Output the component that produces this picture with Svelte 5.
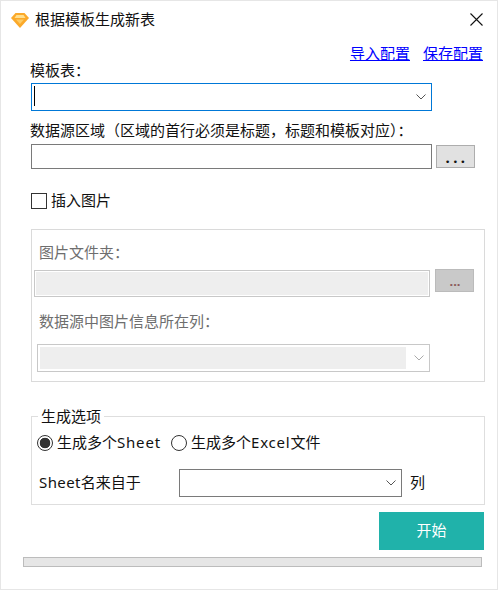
<script>
  const chevron = 'M0.5 0.5 L5 5 L9.5 0.5';
</script>

<div class="window">
  <header class="titlebar">
    <svg class="logo" width="18" height="15" viewBox="0 0 18 15">
      <path d="M4.5 0 H13.5 L18 5 L9 15 L0 5 Z" fill="#fba92a" />
      <path d="M5.5 2 H12.5 L14.5 5 H3.5 Z" fill="#ffdf8e" />
      <path d="M5 6.5 H13 L9 11 Z" fill="#fdcb63" />
    </svg>
    <span class="title">根据模板生成新表</span>
    <svg class="close" width="13" height="13" viewBox="0 0 13 13">
      <path d="M0.5 0.5 L12.5 12.5 M12.5 0.5 L0.5 12.5" stroke="#111" stroke-width="1.1" fill="none" />
    </svg>
  </header>

  <div class="links">
    <a href="#import">导入配置</a>
    <a href="#save">保存配置</a>
  </div>

  <main class="form">
    <div class="label first">模板表：</div>
    <div class="combo focused">
      <span class="caret"></span>
      <svg class="chev" width="10" height="6" viewBox="0 0 10 6"><path d={chevron} stroke="#555" fill="none" /></svg>
    </div>

    <div class="label second">数据源区域（区域的首行必须是标题，标题和模板对应）：</div>
    <div class="source-row">
      <div class="input"></div>
      <button class="browse">...</button>
    </div>

    <label class="check-row">
      <span class="checkbox"></span>
      <span class="lifted">插入图片</span>
    </label>

    <section class="panel">
      <div class="dim-label one">图片文件夹：</div>
      <div class="folder-row">
        <div class="dim-input"></div>
        <button class="dim-browse">...</button>
      </div>
      <div class="dim-label two">数据源中图片信息所在列：</div>
      <div class="dim-combo">
        <div class="dim-fill"></div>
        <svg class="chev" width="10" height="6" viewBox="0 0 10 6"><path d={chevron} stroke="#aaa" fill="none" /></svg>
      </div>
    </section>

    <fieldset class="options">
      <legend>生成选项</legend>
      <div class="radio-row">
        <span class="radio on"></span><span class="r1 lifted">生成多个<span class="latin">Sheet</span></span>
        <span class="radio"></span><span class="lifted">生成多个<span class="latin">Excel</span>文件</span>
      </div>
      <div class="sheet-row">
        <span class="sheet-label lifted"><span class="latin tight">Sheet</span>名来自于</span>
        <div class="combo plain">
          <svg class="chev" width="10" height="6" viewBox="0 0 10 6"><path d={chevron} stroke="#555" fill="none" /></svg>
        </div>
        <span class="col lifted">列</span>
      </div>
    </fieldset>

    <button class="start">开始</button>
  </main>

  <div class="progress"></div>
</div>

<style>
  :global(body) {
    margin: 0;
  }
  .window {
    width: 498px;
    height: 590px;
    box-sizing: border-box;
    border: 1px solid #e6e6e6;
    background: #fff;
    font: 15px/16px "Noto Sans", "Noto Sans CJK SC", sans-serif;
    color: #111;
    overflow: hidden;
  }
  .titlebar {
    box-sizing: border-box;
    height: 39px;
    display: flex;
    align-items: center;
    padding: 0 14px 4px 10px;
  }
  .logo {
    flex: none;
    margin: 3px 6px 0 0;
  }
  .close {
    margin-top: 1px;
  }
  .title {
    flex: 1;
  }
  .links {
    height: 18px;
    margin-top: 4px;
    margin-bottom: 1px;
    padding-right: 14px;
    display: flex;
    justify-content: flex-end;
    gap: 13px;
    line-height: 18px;
  }
  .links a {
    color: #0000ff;
  }
  .form {
    padding-left: 30px;
    width: 454px;
    display: flex;
    flex-direction: column;
  }
  .label {
    height: 16px;
    margin-left: -1px;
  }
  .label.first {
    margin-top: -1px;
  }
  .label.second {
    margin-top: 11px;
  }
  .combo {
    box-sizing: border-box;
    background: #fff;
    border: 1px solid #7a7a7a;
    display: flex;
    align-items: center;
    justify-content: flex-end;
    position: relative;
  }
  .combo.focused {
    width: 401px;
    height: 28px;
    margin-top: 5px;
    border-color: #0078d7;
  }
  .caret {
    position: absolute;
    left: 2px;
    top: 2px;
    width: 1px;
    height: 20px;
    background: #000;
  }
  .chev {
    margin-right: 5px;
    flex: none;
  }
  .source-row {
    margin-top: 6px;
    display: flex;
    align-items: flex-start;
    gap: 4px;
  }
  .input {
    box-sizing: border-box;
    width: 401px;
    height: 25px;
    border: 1px solid #7a7a7a;
  }
  .browse {
    box-sizing: border-box;
    width: 39px;
    height: 23px;
    margin-top: 1px;
    padding: 0 0 0 3px;
    background: #e1e1e1;
    border: 1px solid #adadad;
    font: bold 15px/18px "Noto Sans", sans-serif;
    letter-spacing: 3.5px;
    color: #111;
  }
  .check-row {
    margin-top: 23px;
    height: 18px;
    display: flex;
    align-items: center;
    gap: 4px;
  }
  .lifted {
    margin-top: -2px;
  }
  .checkbox {
    box-sizing: border-box;
    width: 16px;
    height: 16px;
    border: 1px solid #333;
  }
  .panel {
    box-sizing: border-box;
    width: 454px;
    height: 153px;
    margin-top: 19px;
    border: 1px solid #dadada;
  }
  .dim-label {
    height: 16px;
    margin-left: 7px;
    color: #6e6e6e;
  }
  .dim-label.one {
    margin-top: 14px;
  }
  .dim-label.two {
    margin-top: 16px;
  }
  .folder-row {
    margin-top: 9px;
    margin-left: 2px;
    display: flex;
    align-items: flex-start;
    gap: 5px;
  }
  .dim-input {
    box-sizing: border-box;
    width: 396px;
    height: 27px;
    margin-top: 1px;
    border: 1px solid #c8c8c8;
    background: #eee;
    box-shadow: inset 0 0 0 1px #fff;
  }
  .dim-browse {
    box-sizing: border-box;
    width: 39px;
    height: 23px;
    padding: 0 0 0 1px;
    background: #c9c9c9;
    border: 1px solid #bbb;
    font: bold 13px/20px "Noto Sans", sans-serif;
    color: #8a5a5a;
  }
  .dim-combo {
    box-sizing: border-box;
    width: 393px;
    height: 28px;
    margin: 15px 0 0 5px;
    border: 1px solid #c8c8c8;
    padding: 2px 0 2px 2px;
    display: flex;
    align-items: center;
  }
  .dim-fill {
    flex: none;
    width: 366px;
    height: 22px;
    background: #eee;
    margin-right: 8px;
  }
  .options {
    box-sizing: border-box;
    width: 454px;
    height: 97px;
    margin: 26px 0 0;
    padding: 0;
    border: 1px solid #dedede;
  }
  legend {
    margin-left: 6px;
    padding: 0 3px;
    line-height: 16px;
  }
  .radio-row {
    margin-top: 10px;
    margin-left: 5px;
    height: 18px;
    display: flex;
    align-items: center;
  }
  .radio {
    box-sizing: border-box;
    width: 16px;
    height: 16px;
    border: 1px solid #333;
    border-radius: 50%;
    margin-right: 4px;
    flex: none;
  }
  .radio.on {
    background: radial-gradient(circle, #333 0 5px, transparent 5.6px);
  }
  .r1 {
    width: 114px;
  }
  .latin {
    letter-spacing: 0.8px;
  }
  .latin.tight {
    letter-spacing: 0.4px;
  }
  .sheet-row {
    margin-top: 17px;
    margin-left: 7px;
    display: flex;
    align-items: center;
  }
  .sheet-label {
    width: 140px;
  }
  .combo.plain {
    width: 223px;
    height: 28px;
  }
  .col {
    margin-left: 8px;
  }
  .start {
    box-sizing: border-box;
    align-self: flex-end;
    width: 105px;
    height: 38px;
    margin-top: 7px;
    margin-right: 1px;
    padding: 0 0 2px;
    border: none;
    background: #20b2aa;
    color: #fff;
    font: 15px/18px "Noto Sans", "Noto Sans CJK SC", sans-serif;
  }
  .progress {
    box-sizing: border-box;
    width: 459px;
    height: 10px;
    margin: 7px 0 0 22px;
    background: #e6e6e6;
    border: 1px solid #bcbcbc;
  }
</style>
